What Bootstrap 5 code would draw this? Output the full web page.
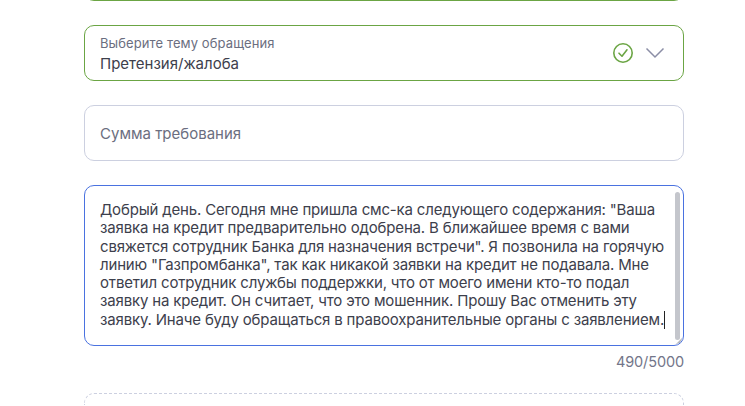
<!DOCTYPE html>
<html lang="ru">
<head>
<meta charset="utf-8">
<title>Обращение</title>
<link rel="stylesheet" href="https://cdn.jsdelivr.net/npm/bootstrap@5.3.0/dist/css/bootstrap.min.css">
<style>
html,body{height:406px;overflow:hidden;background:#fff}
body{font-family:Inter,"Noto Sans",sans-serif;color:#3d404c}
.form-wrap{width:600px;margin:-55px 0 0 84px}
.fld{height:56px;border:1px solid #ccd0e0;border-radius:10px;padding:0 18px 0 15px;background:#fff;margin-bottom:24px}
.fld-ok{border-color:#6ba544}
.fld-txt{padding-top:2px}
.fld-lab{font-size:13px;line-height:16px;color:#6b6e80;letter-spacing:.1px}
.fld-val{font-size:15px;line-height:20px;color:#3d404c;margin-top:3px}
.fld-ph{font-size:15px;color:#6b6e80;padding-top:2px}
.chev-gap{margin-left:11px}
.msg-box{height:161px;border:1px solid #4a72e0;border-radius:10px;padding:15px 15px 0;font-size:15px;line-height:18.3px;color:#3d404c;letter-spacing:-.17px;white-space:nowrap}
.msg-bar{right:3px;top:6px;bottom:5px;width:5px;background:#c4c6cc;border-radius:3px}
.msg-grip{right:1px;bottom:1px;border-style:solid;border-width:0 0 6px 6px;border-color:transparent transparent #b4b6bc transparent;border-bottom-right-radius:8px}
.msg-caret{display:inline-block;width:1px;height:18px;background:#222;vertical-align:-4px}
.msg-count{font-size:14.5px;line-height:20px;color:#73768a;margin-top:6px;letter-spacing:-.12px}
.drop-zone{height:12px;border:1px dashed #ccd0e0;border-bottom:0;border-radius:10px 10px 0 0;margin-top:21px}
</style>
</head>
<body>
<div class="form-wrap">
  <div class="fld fld-ok"></div>
  <div class="fld fld-ok d-flex align-items-center justify-content-between">
    <div class="fld-txt">
      <div class="fld-lab">Выберите тему обращения</div>
      <div class="fld-val">Претензия/жалоба</div>
    </div>
    <div class="d-flex align-items-center">
      <svg width="22" height="22" viewBox="0 0 22 22" fill="none" stroke="#6ba544" stroke-width="1.6"><circle cx="11" cy="11" r="9.2"/><path d="M7 11.2l3 3 5-6.4" stroke-linecap="round" stroke-linejoin="round"/></svg>
      <svg class="chev-gap" width="20" height="12" viewBox="0 0 20 12" fill="none" stroke="#8b8ea6" stroke-width="1.5"><path d="M1.5 1.5L10 10l8.5-8.5"/></svg>
    </div>
  </div>
  <div class="fld d-flex align-items-center"><span class="fld-ph">Сумма требования</span></div>
  <div class="msg-box position-relative">
    Добрый день. Сегодня мне пришла смс-ка следующего содержания: "Ваша<br>
    заявка на кредит предварительно одобрена. В ближайшее время с вами<br>
    свяжется сотрудник Банка для назначения встречи". Я позвонила на горячую<br>
    линию "Газпромбанка", так как никакой заявки на кредит не подавала. Мне<br>
    ответил сотрудник службы поддержки, что от моего имени кто-то подал<br>
    заявку на кредит. Он считает, что это мошенник. Прошу Вас отменить эту<br>
    заявку. Иначе буду обращаться в правоохранительные органы с заявлением.<span class="msg-caret"></span>
    <div class="msg-bar position-absolute"></div>
    <div class="msg-grip position-absolute"></div>
  </div>
  <div class="msg-count text-end">490/5000</div>
  <div class="drop-zone"></div>
</div>
<script src="https://cdn.jsdelivr.net/npm/bootstrap@5.3.0/dist/js/bootstrap.bundle.min.js"></script>
</body>
</html>
